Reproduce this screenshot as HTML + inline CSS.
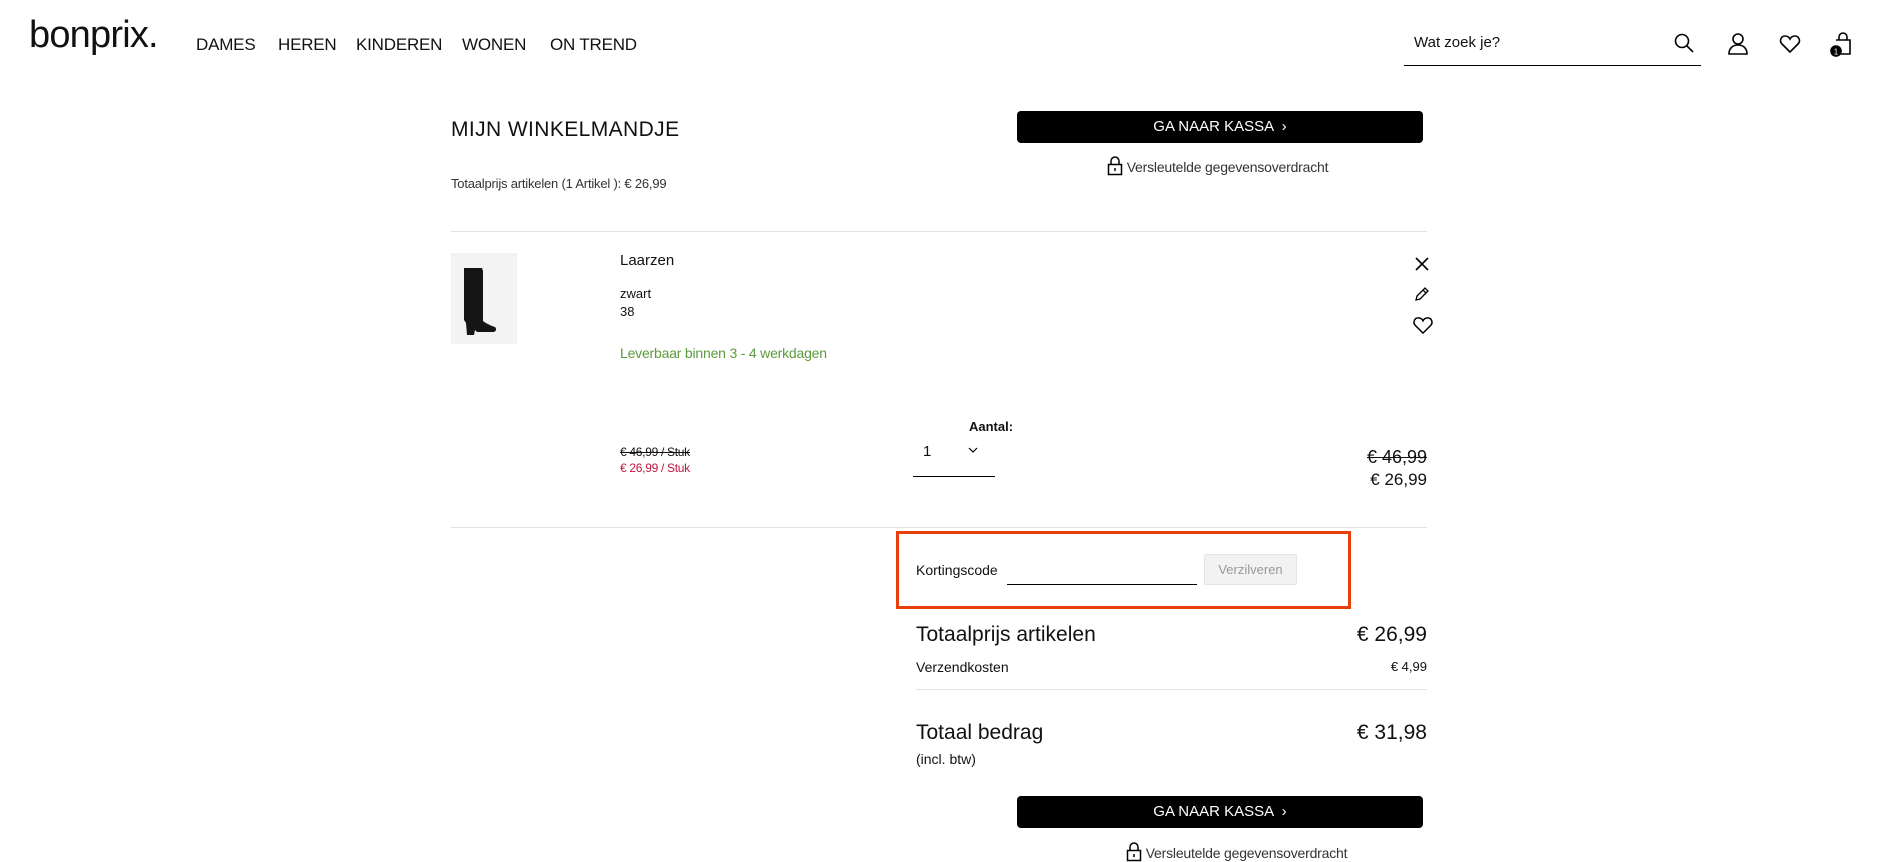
<!DOCTYPE html>
<html><head><meta charset="utf-8"><style>
*{margin:0;padding:0;box-sizing:border-box}
body{width:1879px;height:856px;background:#fff;font-family:"Liberation Sans",sans-serif;color:#111;position:relative;overflow:hidden}
.a{position:absolute;white-space:nowrap}
.nav{font-size:17px;top:35px;letter-spacing:-0.2px}
.btn{position:absolute;left:1017px;width:406px;height:32px;background:#000;border-radius:4px;color:#fff;font-size:15px;text-align:center;line-height:32px}
.hr{position:absolute;height:1px;background:#e2e2e2}
.r{text-align:right}
</style></head><body>
<div class="a" style="left:29px;top:14px;font-size:38px;letter-spacing:-0.8px">bonprix.</div>
<div class="a nav" style="left:196px">DAMES</div>
<div class="a nav" style="left:278px">HEREN</div>
<div class="a nav" style="left:356px">KINDEREN</div>
<div class="a nav" style="left:462px">WONEN</div>
<div class="a nav" style="left:550px">ON TREND</div>
<div class="a" style="left:1414px;top:34px;font-size:15px">Wat zoek je?</div>
<div class="a" style="left:1404px;top:65px;width:297px;height:1px;background:#000"></div>
<svg class="a" style="left:1673px;top:32px" width="22" height="22" viewBox="0 0 22 22" fill="none" stroke="#000" stroke-width="1.6"><circle cx="9" cy="9" r="6.5"/><path d="M14 14l6 6"/></svg>
<svg class="a" style="left:1727px;top:32px" width="22" height="24" viewBox="0 0 22 24" fill="none" stroke="#000" stroke-width="1.6"><circle cx="11" cy="7" r="5"/><path d="M2 22c0-6 4-9 9-9s9 3 9 9z"/></svg>
<svg class="a" style="left:1779px;top:34px" width="22" height="20" viewBox="0 0 22 20" fill="none" stroke="#000" stroke-width="1.6"><path d="M11 18L3 10C0 7 2 2 6 2c2 0 4 1 5 3 1-2 3-3 5-3 4 0 6 5 3 8z"/></svg>
<svg class="a" style="left:1828px;top:32px" width="26" height="26" viewBox="0 0 26 26" fill="none" stroke="#000" stroke-width="1.6"><path d="M8 8h14v14H10M11 8V5a4 4 0 018 0v3"/><circle cx="8" cy="19" r="5" fill="#000"/><text x="8" y="22.5" fill="#fff" stroke="none" font-size="8" text-anchor="middle" font-family="Liberation Sans">1</text></svg>

<div class="a" style="left:451px;top:118px;font-size:21px;letter-spacing:0.4px">MIJN WINKELMANDJE</div>
<div class="btn" style="top:111px">GA NAAR KASSA &nbsp;›</div>
<div class="a" style="left:1107px;top:156px;font-size:14px;color:#333;letter-spacing:-0.2px"><svg width="16" height="20" viewBox="0 0 16 20" fill="none" stroke="#000" stroke-width="1.5" style="vertical-align:-4px"><rect x="1.5" y="8.5" width="13" height="10"/><path d="M4 8.5V5a4 4 0 018 0v3.5M8 12v3"/></svg> Versleutelde gegevensoverdracht</div>
<div class="a" style="left:451px;top:176px;font-size:13px;color:#333;letter-spacing:-0.2px">Totaalprijs artikelen (1 Artikel ): € 26,99</div>
<div class="hr" style="left:451px;top:231px;width:976px"></div>

<div class="a" style="left:451px;top:253px;width:66px;height:91px;background:#f3f3f3"></div>
<svg class="a" style="left:451px;top:253px" width="66" height="91" viewBox="0 0 66 91"><path d="M13 15h18l1 3v50c4 3 9 5 12 6 2 2 1 5-2 5H26l-2-2-1 5h-7l-1-12-2-3z" fill="#151515"/></svg>
<div class="a" style="left:620px;top:252px;font-size:15px">Laarzen</div>
<div class="a" style="left:620px;top:286px;font-size:13px">zwart</div>
<div class="a" style="left:620px;top:304px;font-size:13px">38</div>
<div class="a" style="left:620px;top:345px;font-size:14px;color:#5a9a3c;letter-spacing:-0.2px">Leverbaar binnen 3 - 4 werkdagen</div>
<svg class="a" style="left:1414px;top:256px" width="16" height="16" viewBox="0 0 16 16" stroke="#000" stroke-width="1.6"><path d="M2 2l12 12M14 2L2 14"/></svg>
<svg class="a" style="left:1414px;top:286px" width="16" height="16" viewBox="0 0 16 16" fill="none" stroke="#000" stroke-width="1.3"><path d="M2 14l1-4 8-8 3 3-8 8zM9 4l3 3"/></svg>
<svg class="a" style="left:1412px;top:316px" width="22" height="19" viewBox="0 0 22 20" fill="none" stroke="#000" stroke-width="1.6"><path d="M11 18L3 10C0 7 2 2 6 2c2 0 4 1 5 3 1-2 3-3 5-3 4 0 6 5 3 8z"/></svg>

<div class="a" style="left:969px;top:419px;font-size:13px;font-weight:bold">Aantal:</div>
<div class="a" style="left:923px;top:443px;font-size:15px">1</div>
<svg class="a" style="left:967px;top:446px" width="12" height="8" viewBox="0 0 12 8" fill="none" stroke="#000" stroke-width="1.2"><path d="M2 2l4 4 4-4"/></svg>
<div class="a" style="left:913px;top:476px;width:82px;height:1px;background:#000"></div>
<div class="a" style="left:620px;top:445px;font-size:12px;text-decoration:line-through;letter-spacing:-0.3px">€ 46,99 / Stuk</div>
<div class="a" style="left:620px;top:461px;font-size:12px;color:#c0163e;letter-spacing:-0.3px">€ 26,99 / Stuk</div>
<div class="a r" style="right:452px;top:447px;font-size:18px;text-decoration:line-through">€ 46,99</div>
<div class="a r" style="right:452px;top:470px;font-size:17px">€ 26,99</div>
<div class="hr" style="left:451px;top:527px;width:976px"></div>

<div class="a" style="left:896px;top:531px;width:455px;height:78px;border:3px solid #e8400c"></div>
<div class="a" style="left:916px;top:562px;font-size:14px">Kortingscode</div>
<div class="a" style="left:1007px;top:584px;width:190px;height:1px;background:#000"></div>
<div class="a" style="left:1204px;top:554px;width:93px;height:31px;background:#f2f2f2;border:1px solid #e5e5e5;border-radius:2px;color:#999;font-size:13px;text-align:center;line-height:29px">Verzilveren</div>

<div class="a" style="left:916px;top:623px;font-size:21px">Totaalprijs artikelen</div>
<div class="a r" style="right:452px;top:623px;font-size:21px">€ 26,99</div>
<div class="a" style="left:916px;top:659px;font-size:14px">Verzendkosten</div>
<div class="a r" style="right:452px;top:659px;font-size:13px">€ 4,99</div>
<div class="hr" style="left:916px;top:689px;width:511px"></div>
<div class="a" style="left:916px;top:721px;font-size:21px">Totaal bedrag</div>
<div class="a r" style="right:452px;top:721px;font-size:21px">€ 31,98</div>
<div class="a" style="left:916px;top:751px;font-size:14px">(incl. btw)</div>
<div class="btn" style="top:796px">GA NAAR KASSA &nbsp;›</div>
<div class="a" style="left:1126px;top:842px;font-size:14px;color:#333;letter-spacing:-0.2px"><svg width="16" height="20" viewBox="0 0 16 20" fill="none" stroke="#000" stroke-width="1.5" style="vertical-align:-4px"><rect x="1.5" y="8.5" width="13" height="10"/><path d="M4 8.5V5a4 4 0 018 0v3.5M8 12v3"/></svg> Versleutelde gegevensoverdracht</div>
</body></html>
